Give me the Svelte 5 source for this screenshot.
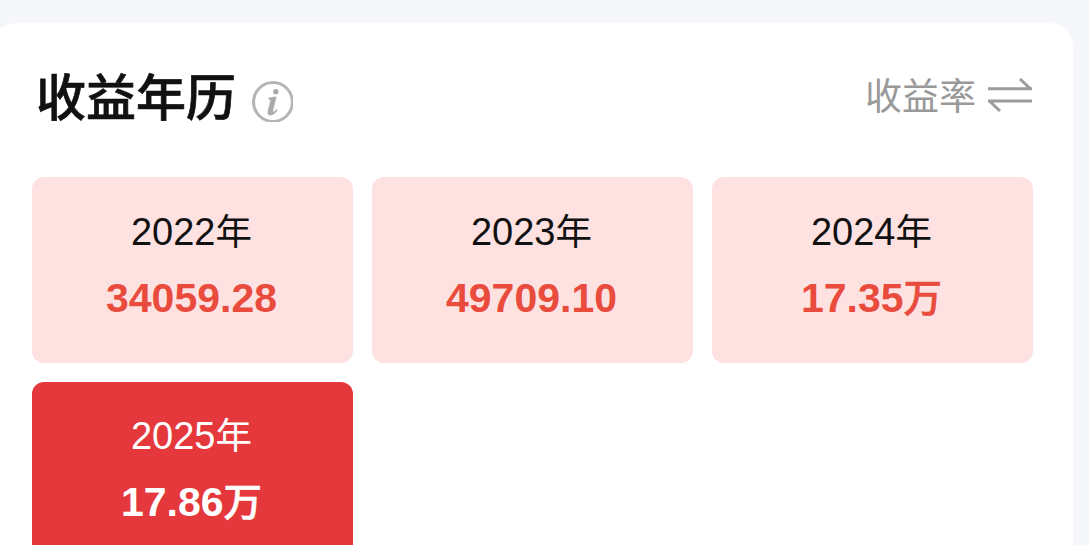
<script>
  const years = [
    { year: 2022, amount: "34059.28", unit: "" },
    { year: 2023, amount: "49709.10", unit: "" },
    { year: 2024, amount: "17.35", unit: "万" },
    { year: 2025, amount: "17.86", unit: "万" },
  ];

  let selected = 2025;
</script>

<div class="page">
  <section class="card">
    <header>
      <div class="heading">
        <h1>收益年历</h1>
        <svg class="info" viewBox="0 0 41 41" width="41" height="41">
          <circle cx="21" cy="21" r="19.4" fill="none" stroke="#b4b4b4" stroke-width="3" />
          <circle cx="23.8" cy="10.8" r="2.7" fill="#aaa" />
          <path d="M17 16.8L24.2 15.8 20.9 29.8Q20.6 31.8 21.8 31L24.5 28.4 25.4 29.3Q21.5 34.6 18 34.2Q15 33.6 16 29.8L18.6 19.4Q18.7 18.3 16.8 18.3Z" fill="#aaa" stroke="#aaa" stroke-width="0.5" />
        </svg>
      </div>
      <button class="toggle">
        <span>收益率</span>
        <svg viewBox="0 0 46 36" width="46" height="36" fill="none" stroke="#9c9c9c" stroke-width="3">
          <path d="M1 10.8H45M43.5 10.8L33 1M45 23H1M2.5 23L13 33" />
        </svg>
      </button>
    </header>

    <div class="grid">
      {#each years as { year, amount, unit }}
        <button class="cell" class:selected={year === selected} on:click={() => (selected = year)}>
          <span class="year">{year}<span class="nian">年</span></span>
          <span class="amount">{amount}<span class="unit">{unit}</span></span>
        </button>
      {/each}
    </div>
  </section>
</div>

<style>
  :global(body) { background: #f6f7fa; overflow: hidden; }

  .page {
    box-sizing: border-box;
    height: 545px;
    padding: 23px 16px 0 0;
    overflow: hidden;
    font-family: "Liberation Sans", "Noto Sans CJK SC", sans-serif;
  }

  .card {
    box-sizing: border-box;
    height: 600px;
    margin-left: -8px;
    padding: 0 40px;
    background: #fff;
    border-radius: 24px;
  }

  header {
    display: flex;
    justify-content: space-between;
    height: 154px;
  }
  .heading { display: flex; padding: 39px 0 0 4px; }
  h1 {
    margin: 0;
    color: #111;
    font-size: 50px;
    font-weight: 500;
    line-height: 74px;
    -webkit-text-stroke: 0.7px #111;
  }
  .info { margin: 19px 0 0 16px; }

  button {
    padding: 0;
    border: 0;
    background: none;
    font-family: inherit;
    cursor: pointer;
  }
  .toggle {
    display: flex;
    align-items: flex-start;
    padding-top: 48px;
    color: #999;
    font-size: 37px;
    line-height: 54px;
  }
  .toggle svg { margin: 7px 0 0 11px; }

  .grid {
    display: grid;
    grid-template-columns: repeat(3, 321px);
    gap: 19px;
  }
  .cell {
    display: flex;
    flex-direction: column;
    align-items: center;
    box-sizing: border-box;
    height: 186px;
    padding: 28px 2px 0 0;
    border-radius: 12px;
    background: #fee2e2;
  }
  .year {
    height: 54px;
    color: #111;
    font-size: 38px;
    line-height: 54px;
    white-space: nowrap;
  }
  .nian { font-size: 36.5px; }
  .amount {
    height: 60px;
    margin-top: 9px;
    color: #e94b3d;
    font-size: 41px;
    font-weight: 700;
    line-height: 60px;
  }
  .unit {
    font-size: 38.5px;
    font-weight: 500;
    -webkit-text-stroke: 0.6px currentColor;
  }
  .selected { padding-top: 27px; background: #e5383c; }
  .selected .year,
  .selected .amount { color: #fff; }
</style>
